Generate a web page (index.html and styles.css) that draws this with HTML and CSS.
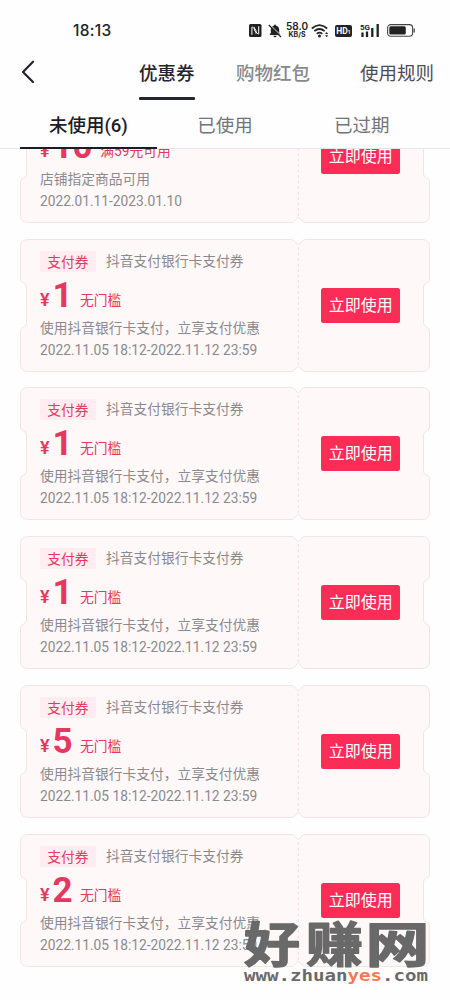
FILE: index.html
```
<!DOCTYPE html>
<html lang="zh-CN">
<head>
<meta charset="utf-8">
<title>优惠券</title>
<link rel="stylesheet" href="styles.css">
</head>
<body>
<svg class="defs" aria-hidden="true">
  <symbol id="ticket" viewBox="0 0 410 133">
    <path class="ticket-shape" d="M8 .5H271Q274 .5 275.500 3Q278.300 8 281 3Q282.500 .5 286 .5H402Q409.500 .5 409.500 8V40Q409.500 43 406.500 44Q403.500 45 403.500 48V84Q403.500 87 406.500 88Q409.500 89 409.500 92V125Q409.500 132.500 402 132.500H286Q282.500 132.500 281 130Q278.300 125 275.500 130Q274 132.500 271 132.500H8Q.5 132.500 .5 125V92Q.5 89 3.500 88Q6.500 87 6.500 84V48Q6.500 45 3.500 44Q.5 43 .5 40V8Q.5 .5 8 .5Z"/>
    <path class="ticket-dash" d="M278.300 8V126"/>
  </symbol>
</svg>
<div class="screen">
  <header class="top">
    <div class="status">
      <span class="time">18:13</span>
      <div class="status-icons">
        <svg class="nfc" width="13" height="13" viewBox="0 0 13 13"><rect width="12.500" height="13" rx="1.500" fill="#222"/><path d="M2.900 10.800V3.500Q2.900 2.500 3.900 3.300L7 6.200V9.800M5.600 3.300V6.700L8.800 9.700Q9.700 10.500 9.700 9.500V2.300" fill="none" stroke="#fff" stroke-width="1"/></svg>
        <svg class="bell" width="14" height="14" viewBox="0 0 14 14"><path d="M7 .6C8 .6 8 1.500 8 1.800C10.300 2.300 11.200 4 11.200 6V9L12.600 11H1.400L2.800 9V6C2.800 4 3.700 2.300 6 1.800C6 1.500 6 .6 7 .6ZM5.300 11.800H8.700Q8.300 13.300 7 13.300T5.300 11.800Z" fill="#222"/><path d="M2 .8L13.500 12" stroke="#fff" stroke-width="1"/><path d="M.8 1L13 13" stroke="#222" stroke-width="1.200"/></svg>
        <div class="speed"><b>58.0</b><span>KB/S</span></div>
        <svg class="wifi" width="19" height="14" viewBox="0 0 19 14"><g fill="none" stroke="#222" stroke-width="1.700"><path d="M.8 4.500Q8.500-2.300 16.200 4.500"/><path d="M3.300 7.200Q8.500 2.800 13.700 7.200"/><path d="M5.700 9.800Q8.500 7.600 11.300 9.800"/></g><circle cx="8.500" cy="12" r="1.500" fill="#222"/><path d="M14 10L15.600 8L17.200 10ZM14 11.200H17.200L15.600 13.200Z" fill="#222"/></svg>
        <span class="hd">HD<small>1</small></span>
        <svg class="signal" width="20" height="15" viewBox="0 0 20 15"><text x="0" y="6.500" class="fiveg">5G</text><path d="M2.500 9.500V14M7 8.500V14M12.300 5V14M17.700 1V14" stroke="#222" stroke-width="2.300" fill="none"/></svg>
        <svg class="battery" width="29" height="13" viewBox="0 0 29 13"><rect x=".6" y=".6" width="25" height="11.600" rx="3.200" fill="none" stroke="#444" stroke-width="1.100"/><rect x="2.300" y="2.300" width="16.500" height="8.200" rx="1.500" fill="#222"/><path d="M27.200 4.500V8.500" stroke="#444" stroke-width="1.300"/></svg>
      </div>
    </div>
    <nav class="nav">
      <svg class="back" width="14" height="24" viewBox="0 0 14 24"><path d="M12 1.700L2 11.900L12 22" fill="none" stroke="#24242e" stroke-width="2.200" stroke-linecap="round" stroke-linejoin="round"/></svg>
      <span class="nav-item current">优惠券</span>
      <span class="nav-item muted">购物红包</span>
      <span class="nav-item rules">使用规则</span>
    </nav>
    <div class="tabs">
      <span class="tab selected">未使用(6)</span>
      <span class="tab">已使用</span>
      <span class="tab">已过期</span>
    </div>
  </header>
  <main class="list">
    <article class="card">
      <svg class="ticket"><use href="#ticket"/></svg>
      <div class="info">
        <div class="title"></div>
        <div class="price"><span class="yen">¥</span><strong>10</strong><span class="limit">满59元可用</span></div>
        <p class="desc">店铺指定商品可用</p><p class="date">2022.01.11-2023.01.10</p>
      </div>
      <div class="action"><button class="use">立即使用</button></div>
    </article>
    <article class="card">
      <svg class="ticket"><use href="#ticket"/></svg>
      <div class="info">
        <div class="title"><span class="tag">支付券</span><span>抖音支付银行卡支付券</span></div>
        <div class="price"><span class="yen">¥</span><strong>1</strong><span class="limit">无门槛</span></div>
        <p class="desc">使用抖音银行卡支付，立享支付优惠</p><p class="date">2022.11.05 18:12-2022.11.12 23:59</p>
      </div>
      <div class="action"><button class="use">立即使用</button></div>
    </article>
    <article class="card">
      <svg class="ticket"><use href="#ticket"/></svg>
      <div class="info">
        <div class="title"><span class="tag">支付券</span><span>抖音支付银行卡支付券</span></div>
        <div class="price"><span class="yen">¥</span><strong>1</strong><span class="limit">无门槛</span></div>
        <p class="desc">使用抖音银行卡支付，立享支付优惠</p><p class="date">2022.11.05 18:12-2022.11.12 23:59</p>
      </div>
      <div class="action"><button class="use">立即使用</button></div>
    </article>
    <article class="card">
      <svg class="ticket"><use href="#ticket"/></svg>
      <div class="info">
        <div class="title"><span class="tag">支付券</span><span>抖音支付银行卡支付券</span></div>
        <div class="price"><span class="yen">¥</span><strong>1</strong><span class="limit">无门槛</span></div>
        <p class="desc">使用抖音银行卡支付，立享支付优惠</p><p class="date">2022.11.05 18:12-2022.11.12 23:59</p>
      </div>
      <div class="action"><button class="use">立即使用</button></div>
    </article>
    <article class="card">
      <svg class="ticket"><use href="#ticket"/></svg>
      <div class="info">
        <div class="title"><span class="tag">支付券</span><span>抖音支付银行卡支付券</span></div>
        <div class="price"><span class="yen">¥</span><strong>5</strong><span class="limit">无门槛</span></div>
        <p class="desc">使用抖音银行卡支付，立享支付优惠</p><p class="date">2022.11.05 18:12-2022.11.12 23:59</p>
      </div>
      <div class="action"><button class="use">立即使用</button></div>
    </article>
    <article class="card">
      <svg class="ticket"><use href="#ticket"/></svg>
      <div class="info">
        <div class="title"><span class="tag">支付券</span><span>抖音支付银行卡支付券</span></div>
        <div class="price"><span class="yen">¥</span><strong>2</strong><span class="limit">无门槛</span></div>
        <p class="desc">使用抖音银行卡支付，立享支付优惠</p><p class="date">2022.11.05 18:12-2022.11.12 23:59</p>
      </div>
      <div class="action"><button class="use">立即使用</button></div>
    </article>
  </main>
  <svg class="watermark" width="190" height="76" viewBox="0 0 190 76">
    <g class="mark-name"><text x="3" y="47" textLength="56" lengthAdjust="spacingAndGlyphs">好</text><text x="65" y="47" textLength="57" lengthAdjust="spacingAndGlyphs">赚</text><text x="124.500" y="47" textLength="64" lengthAdjust="spacingAndGlyphs">网</text></g>
    <text class="mark-url" x="3" y="66" textLength="184" lengthAdjust="spacingAndGlyphs">www.zhuan<tspan class="yes">yes</tspan>.com</text>
  </svg>
</div>
</body>
</html>
```
FILE: styles.css
```
* { box-sizing: border-box; }
body { margin: 0; background: #fefefe; font-family: Roboto, "Noto Sans CJK SC", sans-serif; }
.defs { position: absolute; width: 0; height: 0; }
.screen { position: relative; width: 450px; height: 1000px; overflow: hidden; display: flex; flex-direction: column; }

.top { height: 149px; flex: none; border-bottom: 1px solid #e6e6e8; }
.status { height: 48px; padding: 13px 34px 0 73px; display: flex; align-items: center; justify-content: space-between; }
.time { font: 500 15.500px/20px Inter, sans-serif; letter-spacing: .3px; color: #222; }
.status-icons { display: flex; align-items: center; width: 167px; }
.bell { margin-left: 6px; flex: none; }
.speed { width: 22px; margin-left: 4px; display: flex; flex-direction: column; align-items: center; color: #222; font-family: Inter, sans-serif; }
.speed b { font-size: 10px; line-height: 9px; font-weight: 600; }
.speed span { font-size: 7px; line-height: 8px; font-weight: 700; }
.wifi { margin-left: 3px; flex: none; }
.hd { width: 17px; height: 12px; margin-left: 5px; border-radius: 2px; background: #222; color: #fff; font: 700 8.500px/12px Roboto, sans-serif; text-align: center; flex: none; }
.hd small { font-size: 5px; }
.signal { margin-left: 8px; flex: none; }
.fiveg { font: 700 8px Roboto, sans-serif; fill: #222; }
.battery { margin-left: 7px; flex: none; }

.nav { height: 52px; padding-left: 21px; display: flex; align-items: flex-start; }
.back { margin-top: 12px; flex: none; }
.nav-item { height: 52px; font-size: 18.500px; line-height: 52px; white-space: nowrap; color: #4c4c55; }
.current { margin-left: 104px; width: 56px; color: #24242e; font-weight: 500; position: relative; }
.current::after { content: ""; position: absolute; left: 0; right: 0; top: 49px; height: 2.500px; background: #24242e; border-radius: 1px; }
.muted { margin-left: 41px; color: #88888d; font-weight: 500; }
.rules { margin-left: 50px; }
.tabs { height: 49px; padding: 0 20px; display: flex; }
.tab { flex: 1; height: 49px; text-align: center; font-size: 18.500px; line-height: 52px; color: #737378; position: relative; }
.selected { color: #1c1c28; font-weight: 500; }
.selected::after { content: ""; position: absolute; left: 0; right: 0; bottom: 0; height: 2.500px; background: #1c1c28; }

.list { flex: 1; min-height: 0; overflow: hidden; padding: 0 20px; display: flex; flex-direction: column; gap: 15.800px; }
.card { position: relative; flex: none; height: 133px; display: flex; }
.card:first-child { margin-top: -59.200px; }
.ticket { position: absolute; left: 0; top: 0; width: 410px; height: 133px; z-index: -1; }
.ticket-shape { fill: #fff8f9; stroke: #f4e3e6; stroke-width: 1; }
.ticket-dash { fill: none; stroke: #f1dde0; stroke-width: 1; stroke-dasharray: 3 2.500; }
.info { width: 278px; padding: 12px 0 0 20px; color: #8a8a8e; font-size: 13.750px; white-space: nowrap; }
.title { height: 21px; display: flex; align-items: flex-start; gap: 10px; line-height: 20px; }
.tag { width: 56px; height: 21px; line-height: 22px; text-align: center; background: #ffedf1; color: #e23a60; border-radius: 1px; }
.price { height: 45px; padding-top: 12px; display: flex; align-items: flex-start; color: #e5375f; }
.yen { width: 12.500px; font-size: 18px; font-weight: 600; line-height: 32px; }
.price strong { font-size: 35px; font-weight: 700; min-width: 20px; margin-right: 7.500px; line-height: 24px; }
.limit { font-size: 13.750px; line-height: 33px; }
.desc, .date { margin: 0; height: 22px; line-height: 23px; }
.action { flex: 1; display: flex; justify-content: center; align-items: center; padding-right: 6.600px; }
.use { width: 79px; height: 35px; padding: 0; border: 0; border-radius: 2.500px; background: #fb2c55; color: #fff; font: 400 16px/36px Roboto, "Noto Sans CJK SC", sans-serif; }

.watermark { position: absolute; left: 241px; top: 915px; }
.mark-name { font: 700 48px "Noto Sans CJK SC", sans-serif; fill: #69696a; stroke: #69696a; stroke-width: 1.400; stroke-linejoin: round; }
.mark-url { font: 700 15px "DejaVu Sans Mono", monospace; fill: #69696a; }
.yes { fill: #fa7850; }
```
